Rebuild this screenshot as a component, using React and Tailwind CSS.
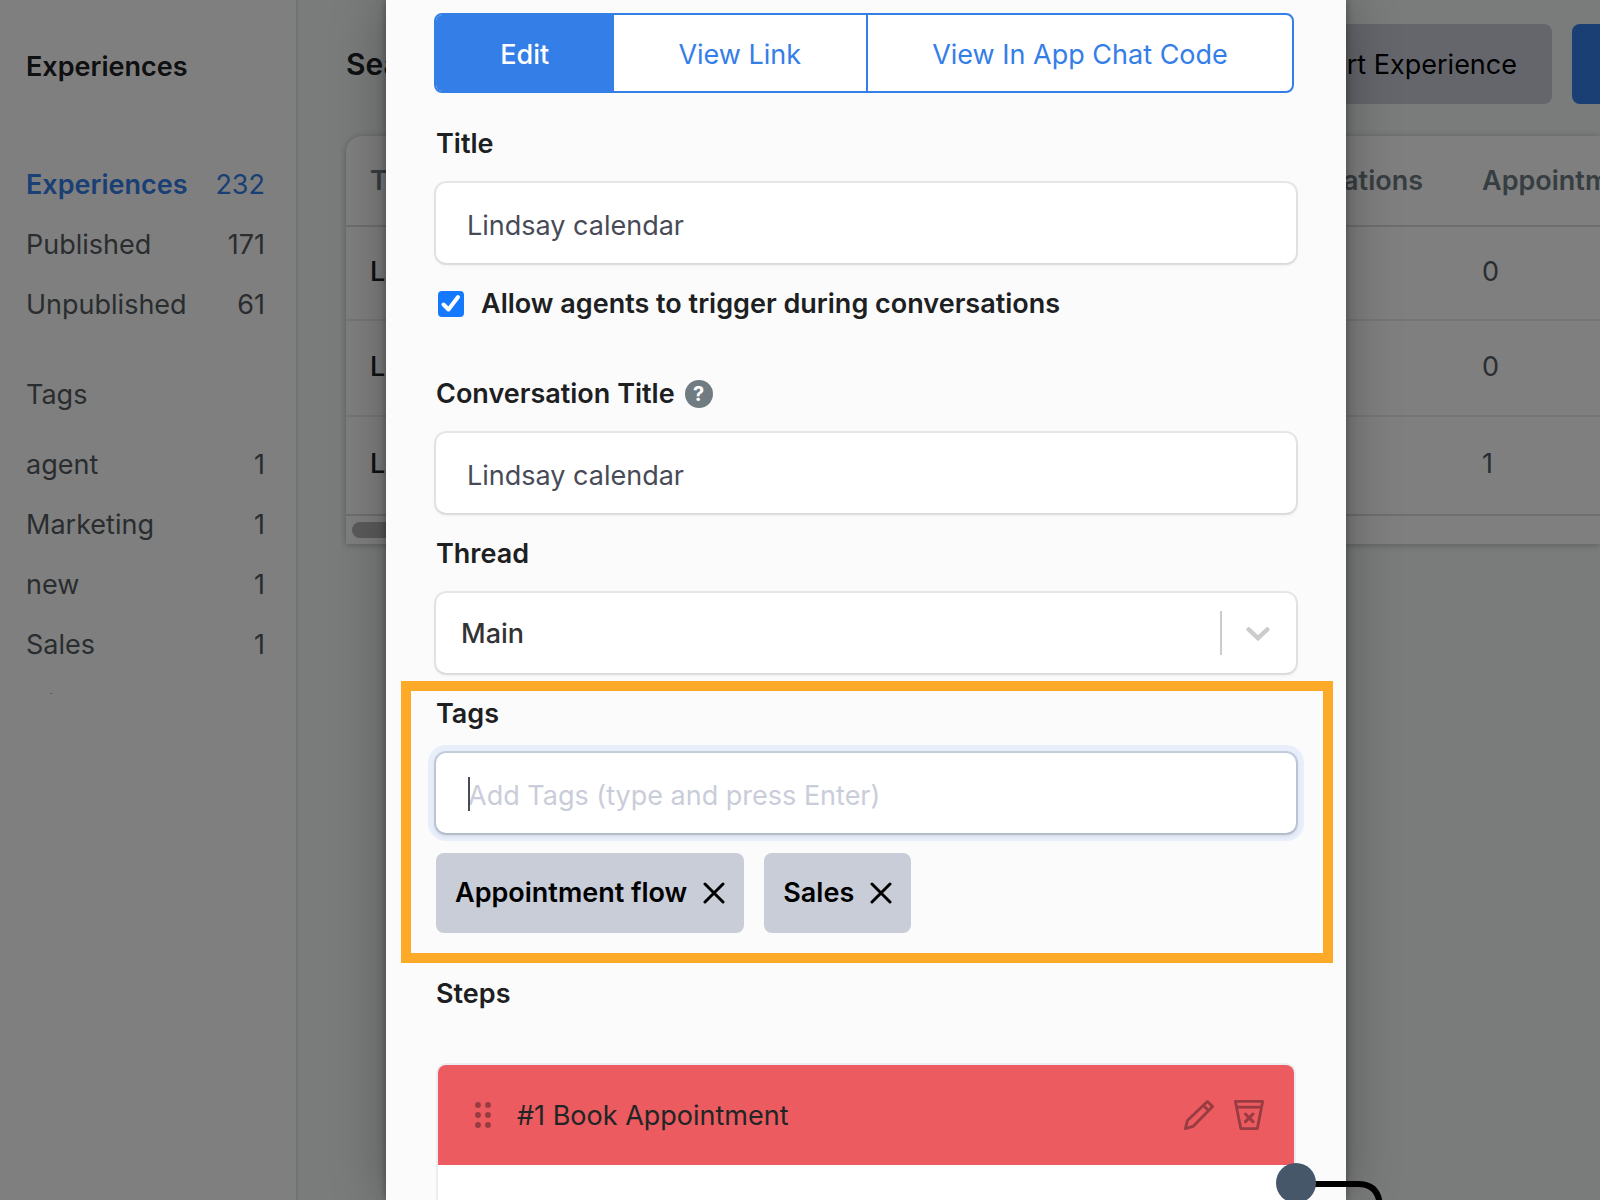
import { useState } from "react";

const folders = [
  { name: "Experiences", count: 232, active: true },
  { name: "Published", count: 171 },
  { name: "Unpublished", count: 61 },
];

const tagFilters = [
  { name: "agent", count: 1 },
  { name: "Marketing", count: 1 },
  { name: "new", count: 1 },
  { name: "Sales", count: 1 },
  { name: "win", count: 1 },
];

const rows = [
  { title: "Lindsay", conversations: "", appointments: 0 },
  { title: "Lindsay", conversations: "", appointments: 0 },
  { title: "Lindsay", conversations: "", appointments: 1 },
];

const field =
  "h-20 w-full rounded-[10px] bg-white shadow-[0_0_0_2px_rgba(0,0,0,0.08),0_2px_4px_rgba(0,0,0,0.08)] outline-none";

function SidebarItem({ name, count, active }) {
  return (
    <li className={active ? "text-[#347ee8]" : "text-[#545b60]"}>
      <a href="#" className="flex h-[60px] items-center justify-between">
        <span className={active ? "font-semibold" : ""}>{name}</span>
        <span>{count}</span>
      </a>
    </li>
  );
}

function Sidebar() {
  return (
    <aside className="w-[298px] shrink-0 border-r-2 border-[#e2e4e4] bg-white pr-[31px] pl-[26px]">
      <h1 className="mt-[47px] h-10 leading-10 font-semibold text-[#1d2022]">Experiences</h1>
      <ul className="mt-[68px]">
        {folders.map((f) => (
          <SidebarItem key={f.name} {...f} />
        ))}
      </ul>
      <h2 className="mt-10 h-10 leading-10 text-[#545b60]">Tags</h2>
      <ul className="mt-5 h-[259px] overflow-hidden">
        {tagFilters.map((t) => (
          <SidebarItem key={t.name} {...t} />
        ))}
      </ul>
    </aside>
  );
}

function ExperienceTable() {
  return (
    <div className="mt-8 ml-12 overflow-hidden rounded-tl-[16px] bg-white shadow-[0_0_6px_rgba(0,0,0,0.15),0_2px_6px_rgba(0,0,0,0.12)]">
      <table className="w-[1480px] table-fixed border-collapse text-left">
        <thead>
          <tr className="h-[90px] border-b-2 border-[#dcdcdc] text-[#6f7c85]">
            <th className="w-[720px] pt-0.5 pl-6 font-semibold">Title</th>
            <th className="w-[392px] pt-0.5 pr-[35px] text-right font-semibold">Conversations</th>
            <th className="pt-0.5 pl-6 font-semibold">Appointments</th>
          </tr>
        </thead>
        <tbody>
          {rows.map((r, i) => (
            <tr key={i} className="h-24 border-b-2 border-[#ececee] text-[#545b60] first:h-[94px] last:h-[99px] last:border-[#dcdcdc]">
              <td className="pb-0.5 pl-6 font-medium text-[#1d2022]">{r.title}</td>
              <td>{r.conversations}</td>
              <td className="pb-0.5 pl-6">{r.appointments}</td>
            </tr>
          ))}
        </tbody>
      </table>
      <div className="h-7 px-1.5 pt-1.5">
        <div className="h-4 w-3/5 rounded-full bg-[#b6b6b6]" />
      </div>
    </div>
  );
}

function Background() {
  return (
    <div className="flex h-screen">
      <Sidebar />
      <main className="min-w-0 flex-1 overflow-hidden bg-[#f4f8f6]">
        <header className="mt-6 flex h-20 items-center justify-between pl-12">
          <span className="text-[30px] font-semibold text-[#1d2022]">Search</span>
          <div className="flex gap-5">
            <button className="h-20 rounded-lg bg-[#cacdd8] px-[35px] pt-0.5 text-black">Import Experience</button>
            <button className="h-20 w-7 overflow-hidden rounded-l-lg bg-[#347ee8]" aria-label="New Experience" />
          </div>
        </header>
        <ExperienceTable />
      </main>
    </div>
  );
}

function Tabs() {
  return (
    <div className="mr-[52px] ml-12 flex h-20 overflow-hidden rounded-lg border-2 border-[#347ee8] bg-white text-[#347ee8]">
      <button className="flex-[178] bg-[#347ee8] pt-1 font-medium text-white">Edit</button>
      <button className="flex-[253] border-r-2 border-[#347ee8] pt-1">View Link</button>
      <button className="flex-[425] pt-1">View In App Chat Code</button>
    </div>
  );
}

function Label({ htmlFor, children }) {
  return (
    <label htmlFor={htmlFor} className="mb-5 flex h-10 items-center pt-0.5 font-semibold">
      {children}
    </label>
  );
}

function Chip({ name, onRemove }) {
  return (
    <button onClick={onRemove} className="flex h-20 items-center gap-4 rounded-lg bg-[#c9cdd8] px-[19px] font-semibold text-black">
      {name}
      <svg width="22" height="22" viewBox="0 0 22 22" fill="none" stroke="currentColor" strokeWidth="3" strokeLinecap="round" aria-hidden="true">
        <path d="M2 2 20 20M20 2 2 20" />
      </svg>
    </button>
  );
}

function DragHandle() {
  return (
    <svg width="16" height="26" viewBox="0 0 16 26" fill="#983c41" aria-hidden="true">
      {[3, 13, 23].map((y) => (
        <g key={y}>
          <circle cx="3" cy={y} r="2.9" />
          <circle cx="13" cy={y} r="2.9" />
        </g>
      ))}
    </svg>
  );
}

function StepCard() {
  return (
    <section className="relative mt-[50px] h-[400px] rounded-t-[10px] border-2 border-[#eaeef3] bg-white">
      <div className="flex h-[100px] items-center rounded-t-lg bg-[#eb5b60] pr-[30px] pl-[37px] text-[#222526]">
        <DragHandle />
        <h3 className="ml-[26px] flex-1 pt-0.5">#1 Book Appointment</h3>
        <button aria-label="Edit step">
          <svg width="30" height="30" viewBox="0 0 30 30" fill="none" stroke="#983c41" strokeWidth="2.8" strokeLinejoin="round">
            <path d="M1.4 28.6 3.4 20.6 23.4 1.6 28.6 6.6 9 26.4Z" />
            <path d="M19.4 5.4 24.6 10.6" />
          </svg>
        </button>
        <button aria-label="Delete step" className="ml-5">
          <svg width="30" height="30" viewBox="0 0 30 30" fill="none" stroke="#983c41" strokeWidth="2.8" strokeLinejoin="round">
            <path d="M1.4 1.4H28.6L23.4 28.6H6.8Z" />
            <path d="M2.4 7.2H27.6" />
            <path d="M11.4 14 19 21.6M19 14 11.4 21.6" strokeWidth="3" strokeLinecap="round" />
          </svg>
        </button>
      </div>
      <svg className="absolute top-[98px] -right-[110px]" width="128" height="60" viewBox="0 0 128 60" fill="none" aria-hidden="true">
        <path d="M30 21H82Q104 21 104 46V60" stroke="#000" strokeWidth="6" />
        <circle cx="20" cy="20" r="20" fill="#455768" />
      </svg>
    </section>
  );
}

function ExperienceDialog() {
  const [title, setTitle] = useState("Lindsay calendar");
  const [conversationTitle, setConversationTitle] = useState("Lindsay calendar");
  const [draft, setDraft] = useState("");
  const [allow, setAllow] = useState(true);
  const [tags, setTags] = useState(["Appointment flow", "Sales"]);

  const addTag = (e) => {
    if (e.key === "Enter" && draft.trim()) {
      e.preventDefault();
      setTags([...tags, draft.trim()]);
      setDraft("");
    }
  };

  return (
    <div role="dialog" aria-label="Edit experience" className="min-w-0 flex-1 bg-[#fbfbfb] pt-[13px] text-[#1d2022] shadow-[0_0_50px_rgba(0,0,0,0.3),0_0_8px_rgba(0,0,0,0.35)]">
      <Tabs />
      <form className="px-[50px] pt-[30px]" onSubmit={(e) => e.preventDefault()}>
        <Label htmlFor="title">Title</Label>
        <input id="title" className={`${field} px-[31px] pt-1 text-[#474b57]`} value={title} onChange={(e) => setTitle(e.target.value)} />

        <label className="mt-5 mb-[50px] flex h-10 items-center pt-0.5 font-semibold">
          <span className="relative ml-0.5 flex">
            <input type="checkbox" checked={allow} onChange={(e) => setAllow(e.target.checked)} className="peer size-[26px] appearance-none rounded-[4px] border-2 border-[#b6b6b6] bg-white checked:border-[#1479ff] checked:bg-[#1479ff]" />
            <svg className="pointer-events-none absolute inset-0 hidden peer-checked:block" width="26" height="26" viewBox="0 0 26 26" fill="none" stroke="#fff" strokeWidth="4" aria-hidden="true">
              <path d="M5.5 13.5 10.5 18.5 20 6" strokeLinecap="round" strokeLinejoin="round" />
            </svg>
          </span>
          <span className="ml-[17px]">Allow agents to trigger during conversations</span>
        </label>

        <Label htmlFor="conversation-title">
          Conversation Title
          <span className="ml-2.5 flex size-7 items-center justify-center rounded-full bg-[#717c82] text-[20px] font-bold text-white">?</span>
        </Label>
        <input id="conversation-title" className={`${field} px-[31px] pt-1 text-[#474b57]`} value={conversationTitle} onChange={(e) => setConversationTitle(e.target.value)} />

        <div className="mt-5">
          <Label htmlFor="thread">Thread</Label>
          <div className={`${field} grid grid-cols-[1fr_76px] items-center`}>
            <select id="thread" className="col-span-2 col-start-1 row-start-1 h-full appearance-none bg-transparent pt-0.5 pl-[25px] font-medium text-[#333333] outline-none">
              <option>Main</option>
            </select>
            <div className="pointer-events-none col-start-2 row-start-1 flex h-11 items-center justify-center border-l-2 border-[#cccccc] pt-0.5 pr-0.5">
              <svg width="24" height="14" viewBox="0 0 24 14" fill="none" stroke="#cccccc" strokeWidth="4.4" strokeLinecap="round" aria-hidden="true">
                <path d="M2.6 2.4 12 11.2 21.4 2.4" />
              </svg>
            </div>
          </div>
        </div>

        <div className="mt-2 -mr-[37px] -ml-[35px] border-[10px] border-[#fdaa29] pt-0.5 pr-[27px] pb-5 pl-[25px]">
          <Label htmlFor="tags">Tags</Label>
          <div className="relative">
            <input id="tags" placeholder="Add Tags (type and press Enter)" value={draft} onChange={(e) => setDraft(e.target.value)} onKeyDown={addTag} className="h-20 w-full rounded-[10px] bg-white px-8 pt-1 text-[#474b57] caret-transparent shadow-[0_0_0_2px_rgba(50,70,100,0.18),0_2px_5px_rgba(0,0,0,0.16),0_0_0_8px_#e8eefa] outline-none placeholder:text-[#c9cdd9]" />
            <span className="pointer-events-none absolute top-6 left-8 h-[34px] w-0.5 bg-[#474b57]" />
          </div>
          <div className="mt-5 flex gap-5">
            {tags.map((t) => (
              <Chip key={t} name={t} onRemove={() => setTags(tags.filter((x) => x !== t))} />
            ))}
          </div>
        </div>

        <h2 className="mt-2.5 flex h-10 items-center pt-0.5 font-semibold">Steps</h2>
        <StepCard />
      </form>
    </div>
  );
}

export default function App() {
  return (
    <div className="relative h-screen overflow-hidden font-['Inter',sans-serif] text-[27px]">
      <Background />
      <div className="absolute inset-0 flex bg-black/50 pr-[254px] pl-[386px]">
        <ExperienceDialog />
      </div>
    </div>
  );
}
